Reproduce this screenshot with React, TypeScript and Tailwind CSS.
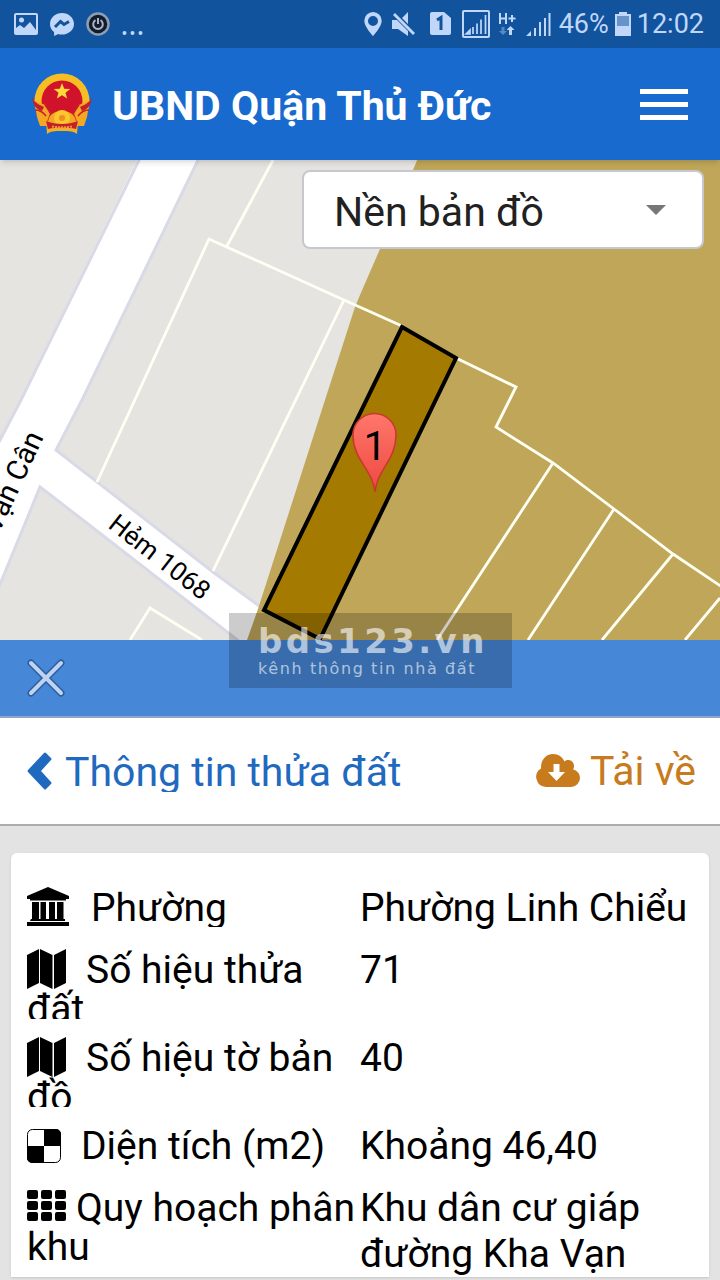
import { ReactNode } from 'react';

function StatusBar() {
  return (
    <div className="flex h-12 items-center justify-between bg-[#11549d] pr-4 pl-3.5 text-[#c0d7fa]">
      <div className="flex items-center gap-3">
        <svg width="24" height="24" viewBox="0 0 24 24">
          <rect x="1" y="2" width="22" height="20" rx="1" fill="none" stroke="currentColor" strokeWidth="2" />
          <circle cx="7.5" cy="8" r="2.5" fill="currentColor" />
          <path d="M2 16l4-3 4 3 6-6 6 8v4H2z" fill="currentColor" />
        </svg>
        <svg width="24" height="24" viewBox="0 0 24 24">
          <path d="M12 1C5.700 1 0 5.600 0 12c0 3.500 1.500 6 4 8l.2 4 4-2c1 .4 2.500.6 3.800.6 6.500 0 12-4.500 12-10.600S18.500 1 12 1z" fill="currentColor" />
          <path d="M5 15l5.500-5.500 3.500 3 5-3" fill="none" stroke="#11549d" strokeWidth="3" />
        </svg>
        <svg width="24" height="24" viewBox="0 0 24 24">
          <circle cx="12" cy="12" r="10.500" fill="#111b2c" stroke="#8d9db2" strokeWidth="2.500" />
          <path d="M9.500 8.200a4.800 4.800 0 1 0 5 0M12 6v6" fill="none" stroke="#a9b6c8" strokeWidth="2" />
        </svg>
        <svg width="21" height="24" viewBox="0 0 21 24" fill="currentColor">
          <circle cx="2.500" cy="21" r="2" />
          <circle cx="10.500" cy="21" r="2" />
          <circle cx="18.500" cy="21" r="2" />
        </svg>
      </div>
      <div className="flex items-center">
        <svg className="mr-2.5" width="18" height="24" viewBox="0 0 18 24">
          <path d="M9 0a8.700 8.700 0 0 0-8.700 8.700C.3 15 9 24 9 24s8.700-9 8.700-15.300A8.700 8.700 0 0 0 9 0zm0 4a5 5 0 1 1 0 10A5 5 0 0 1 9 4z" fill="currentColor" fillRule="evenodd" />
        </svg>
        <svg className="mr-3.5" width="24" height="24" viewBox="0 0 24 24">
          <path d="M0 8h5L16 19v5l-10-7H0zM10 6l6-6v12zM1 3l2-2 20 20-2 2z" fill="currentColor" />
          <path d="M4 1l19 19" stroke="#11549d" strokeWidth="1" />
        </svg>
        <svg className="mr-2.5" width="22" height="24" viewBox="0 0 22 24">
          <path d="M2 0h12l7 6v15a2 2 0 0 1-2 2H2a2 2 0 0 1-2-2V2a2 2 0 0 1 2-2z" fill="currentColor" />
          <path d="M7 8l4-2.500V18" fill="none" stroke="#11549d" strokeWidth="3" />
        </svg>
        <svg className="mr-2" width="28" height="28" viewBox="0 0 28 28">
          <rect x="1" y="1" width="26" height="26" rx="1" fill="none" stroke="currentColor" strokeWidth="2" />
          <path d="M4 24l4-4v4zM11 24v-7M15 24V13.500M19 24V9.500M23.500 24V5" fill="currentColor" stroke="currentColor" strokeWidth="1.700" />
        </svg>
        <svg className="mr-2.5" width="18" height="24" viewBox="0 0 18 24">
          <path d="M2 1v11M8 1v11M2 6.500h6M10.500 6.500h7M14 3v7" fill="none" stroke="currentColor" strokeWidth="2" />
          <path d="M12.500 14l4 4h-2.500v5h-3v-5H8.500z" fill="currentColor" />
          <path d="M5 23l-4-4h2.500v-4h3v4H9z" fill="currentColor" opacity=".4" />
        </svg>
        <svg className="mr-2" width="25" height="26" viewBox="0 0 25 26">
          <path d="M0 25l5-5v5zM8 25h2v-8H8zM13 25h2V11h-2zM18 25h2V7h-2zM22.500 25h2V2h-2z" fill="currentColor" />
        </svg>
        <span className="text-[27px] leading-8">46%</span>
        <svg className="mx-1.5" width="16" height="24" viewBox="0 0 16 24">
          <path d="M4 0h8v2h4v22H0V2h4z" fill="currentColor" />
          <path d="M2 4h12v10H2z" fill="#6893c9" />
        </svg>
        <span className="text-[27px] leading-8">12:02</span>
      </div>
    </div>
  );
}

function Emblem() {
  return (
    <svg width="60" height="62" viewBox="0 0 60 62">
      <circle cx="30" cy="28" r="27.500" fill="#f7bd25" />
      <circle cx="30" cy="28" r="20.500" fill="#d0132a" />
      <path d="M2 27l11 5 5 9 2 12H8L5 44z" fill="#f5a623" />
      <path d="M58 27l-11 5-5 9-2 12h12l3-9z" fill="#f5a623" />
      <path d="M0 23c1 5 5 8 12 11l-2 4C4 36 1 33 0 23zM60 23c-1 5-5 8-12 11l2 4c6-2 9-5 10-15z" fill="#c4202a" />
      <path d="M3 37c5 0 8 2 11 6M57 37c-5 0-8 2-11 6M13 32l6 8-3 8M47 32l-6 8 3 8" stroke="#c4202a" strokeWidth="1.500" fill="none" />
      <path d="M30 10l2.200 5.700 6.100.2-4.800 3.800 1.700 5.900-5.200-3.400-5.200 3.400 1.700-5.900-4.800-3.800 6.100-.2z" fill="#ffd83b" />
      <path d="M16 50c0-8 6-12 14-12s14 4 14 12z" fill="#f5a623" />
      <circle cx="30" cy="45" r="8" fill="#fbc72c" />
      <circle cx="30" cy="45" r="3" fill="#ee8d22" />
      <path d="M14 48c10 4 22 4 32 0l-1 13c-4-3-7-3-15-3s-11 0-15 3z" fill="#f5b026" />
      <path d="M14 48c10 4 22 4 32 0l-2 8c-9-2-19-2-28 0z" fill="#c4202a" />
      <path d="M20 53.500q10 1.500 20 0" stroke="#f0973a" strokeWidth="2" strokeDasharray="2 1" fill="none" />
    </svg>
  );
}

function Header() {
  return (
    <header className="relative z-10 flex h-28 items-center justify-between bg-[#196ace] px-8 shadow-md">
      <div className="flex items-center gap-5">
        <Emblem />
        <h1 className="pt-1 text-[41px] leading-12 font-bold text-white">UBND Quận Thủ Đức</h1>
      </div>
      <button type="button" aria-label="Menu" className="flex flex-col gap-2">
        <span className="h-[5px] w-12 bg-white" />
        <span className="h-[5px] w-12 bg-white" />
        <span className="h-[5px] w-12 bg-white" />
      </button>
    </header>
  );
}

function ParcelMap() {
  return (
    <svg className="block h-[480px] w-full" viewBox="0 0 720 480" preserveAspectRatio="xMidYMid slice">
      <defs>
        <linearGradient id="pin" x1="0" y1="0" x2="0" y2="1">
          <stop offset="0" stopColor="#ff776b" />
          <stop offset="1" stopColor="#ee4840" />
        </linearGradient>
      </defs>
      <rect width="720" height="480" fill="#e5e4e1" />
      {/* roads */}
      <path
        d="M139 -4L0 281V425L40 327L79 357L240 482H262L262 448L213 412L97 322L56 290L82 240L200 -4z"
        fill="#fff"
      />
      <path
        d="M141 -4L21 240L-1 282M-1 427L40 327L79 357L240 482M262 448L213 412L56 290L82 240L200 -4"
        fill="none"
        stroke="#d8dae6"
        strokeWidth="3"
      />
      <path d="M418 -2L380 89L360 135L355 147L325 240L258 449L247 480H720V-2z" fill="#bfa659" />
      {/* parcel borders */}
      <path
        d="M273 0L227 86M97 322L209 79L344 140L402 166M344 140L213 411M130 480L150 448L202 480M456 198L516 227L496 267L553 303L614 349L673 394L722 427M553 303L437 480M614 349L528 480M673 394L602 480M720 438L685 480"
        fill="none"
        stroke="#fffff4"
        strokeWidth="2.800"
      />
      <path d="M402 167L456 198L320 479L264 450z" fill="#a57a00" stroke="#000" strokeWidth="4" />
      <path
        d="M375 332C373 310 353 300 353 275A21.500 21.500 0 0 1 396 275C396 300 377 310 375 332z"
        fill="url(#pin)"
        stroke="#c8382f"
        strokeWidth="1.500"
      />
      <text x="375" y="300" textAnchor="middle" fontSize="40">
        1
      </text>
      <text transform="translate(107 367) rotate(38)" fontSize="26">
        Hẻm 1068
      </text>
      <text transform="translate(44 277) rotate(-65)" textAnchor="end" fontSize="29">
        Vạn Cân
      </text>
    </svg>
  );
}

function LayerSelect() {
  return (
    <div className="absolute top-2.5 right-4 z-20 w-[402px]">
      <select
        aria-label="Nền bản đồ"
        className="h-[79px] w-full appearance-none rounded-lg border-2 border-[#c6c7cf] bg-white pt-1.5 pr-16 pl-[30px] text-[41px] text-[#212121]"
      >
        <option>Nền bản đồ</option>
      </select>
      <svg className="pointer-events-none absolute top-[35px] right-[38px]" width="20" height="10" viewBox="0 0 20 10">
        <path d="M0 0h20L10 10z" fill="#777" />
      </svg>
    </div>
  );
}

function CloudIcon() {
  return (
    <svg width="44" height="34" viewBox="0 0 44 34" fill="currentColor">
      <path
        fillRule="evenodd"
        d="M10 33A10 10 0 0 1 5 14.500C4.500 6 10 0 17 0c5.500 0 9.500 3 11.500 7.500 4-3.500 10-.5 9.500 5.500l-.8 2.500C41 16.500 44 19.500 44 24a9 9 0 0 1-9 9zM17.500 10v8H12l8.500 9 8.500-9h-5.500v-8z"
      />
    </svg>
  );
}

function UniversityIcon() {
  return (
    <svg className="inline-block align-[-6px]" width="42" height="40" viewBox="0 0 42 40">
      <path d="M21 0l21 9v3h-3v1.500H3V12H0V9zM5 15h7v17H5zM13.500 15H19v17h-5.500zM22 15h6v17h-6zM30 15h6.500v17H30zM4 32h34v2H3zM0 35h42v4H0z" />
    </svg>
  );
}

function MapIcon() {
  return (
    <svg className="inline-block align-[-6px]" width="39" height="40" viewBox="0 0 39 40">
      <path d="M0 6L12 0v34L0 40zM13 0l12.500 6v34L13 34zM27 6L39 0v34l-12 6z" />
    </svg>
  );
}

function AreaIcon() {
  return (
    <svg className="inline-block align-[-4px]" width="34" height="34" viewBox="0 0 34 34">
      <rect x=".5" y=".5" width="33" height="33" rx="5" fill="#fff" stroke="#000" />
      <path d="M17 0h12a5 5 0 0 1 5 5v12H17zM0 17h17v17H5a5 5 0 0 1-5-5z" />
    </svg>
  );
}

function GridIcon() {
  return (
    <svg className="inline-block align-baseline" width="39" height="31" viewBox="0 0 39 31">
      {[0, 11, 22].map(y => [0, 14, 28].map(x => <rect key={`${x}-${y}`} x={x} y={y} width="11" height="9" rx="2" />))}
    </svg>
  );
}

interface InfoRow {
  icon: ReactNode;
  label: string;
  value: string;
  gap: string;
  rowClass: string;
  labelClass: string;
}

const rows: InfoRow[] = [
  { icon: <UniversityIcon />, label: 'Phường', value: 'Phường Linh Chiểu', gap: 'ml-[22px]', rowClass: 'h-[62px]', labelClass: 'h-[46px] pt-1.5' },
  { icon: <MapIcon />, label: 'Số hiệu thửa đất', value: '71', gap: 'ml-5', rowClass: 'h-[88px]', labelClass: 'h-[76px] pt-1.5' },
  { icon: <MapIcon />, label: 'Số hiệu tờ bản đồ', value: '40', gap: 'ml-5', rowClass: 'h-[88px]', labelClass: 'h-[76px] pt-1.5' },
  { icon: <AreaIcon />, label: 'Diện tích (m2)', value: 'Khoảng 46,40', gap: 'ml-5', rowClass: 'h-[62px]', labelClass: 'h-[56px] pt-2' },
  { icon: <GridIcon />, label: 'Quy hoạch phân khu', value: 'Khu dân cư giáp đường Kha Vạn', gap: 'ml-2.5', rowClass: 'h-[93px]', labelClass: 'h-[92px] pt-2' },
];

function InfoTable() {
  return (
    <table className="w-full table-fixed border-collapse text-[39px] text-black">
      <tbody>
        {rows.map(row => (
          <tr key={row.label} className={row.rowClass}>
            <th scope="row" className="w-1/2 p-0 pl-4 text-left align-top font-normal">
              <div className={`overflow-hidden leading-[39px] ${row.labelClass}`}>
                {row.icon}
                <span className={row.gap}>{row.label}</span>
              </div>
            </th>
            <td className="p-0 pt-1 pr-2 align-top leading-[46px]">{row.value}</td>
          </tr>
        ))}
      </tbody>
    </table>
  );
}

export default function App() {
  return (
    <div className="min-h-screen bg-[#e3e3e3] font-['Roboto',sans-serif]">
      <StatusBar />
      <Header />
      <section className="relative overflow-hidden">
        <ParcelMap />
        <LayerSelect />
        <div className="flex h-[78px] items-center border-b-2 border-[#8fa5c4] bg-[#4687d7] pl-[27px]">
          <button type="button" aria-label="Đóng">
            <svg width="38" height="38" viewBox="0 0 38 38" fill="none" strokeLinecap="round">
              <path d="M4 4l30 30M34 4L4 34" stroke="#2d5c9c" strokeWidth="7" />
              <path d="M4 4l30 30M34 4L4 34" stroke="#bcd3f2" strokeWidth="4" />
            </svg>
          </button>
        </div>
        <div className="pointer-events-none absolute bottom-[30px] left-[229px] h-[75px] w-[283px] bg-black/20 pt-2.5 pl-[29px] font-['DejaVu_Sans',sans-serif] text-white/60">
          <p className="text-[34px] leading-9 font-bold tracking-widest">bds123.vn</p>
          <p className="text-[16px] leading-5 tracking-widest whitespace-nowrap">kênh thông tin nhà đất</p>
        </div>
      </section>
      <nav className="flex h-[108px] items-center justify-between border-b-2 border-[#adadad] bg-white pr-6 pl-[27px] text-[41px] leading-11">
        <a href="#" className="flex items-center gap-3 text-[#1f69bf]">
          <svg width="26" height="38" viewBox="0 0 26 38" fill="currentColor">
            <path d="M17 1q1-1 2 0l5 5q1 1 0 2L14 19l10 11q1 1 0 2l-5 5q-1 1-2 0L1 20q-1-1 0-2z" />
          </svg>
          <span className="h-[42px] overflow-hidden">Thông tin thửa đất</span>
        </a>
        <a href="#" className="flex items-center gap-2.5 text-[#c87b1c]">
          <CloudIcon />
          Tải về
        </a>
      </nav>
      <main className="px-[11px] pt-[27px] pb-[5px]">
        <div className="rounded-t-md bg-white pt-7 shadow-sm">
          <InfoTable />
        </div>
      </main>
    </div>
  );
}
